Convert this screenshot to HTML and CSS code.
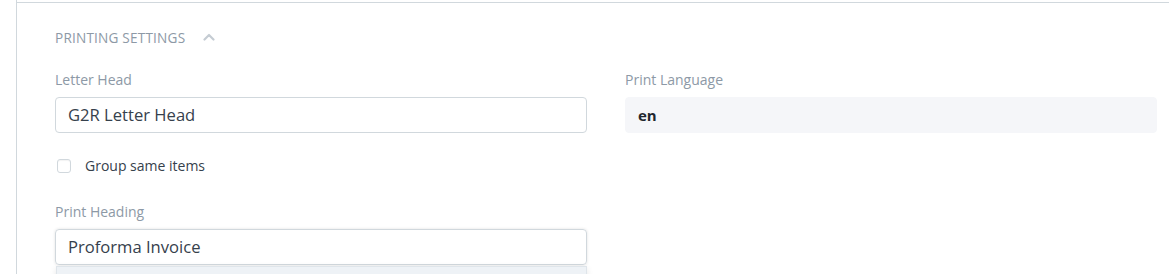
FILE: index.html
```html
<!DOCTYPE html>
<html>
<head>
<meta charset="utf-8">
<link rel="stylesheet" href="styles.css">
</head>
<body>
<div class="frame">
  <section class="section">
    <div class="section-head">
      <span class="section-title">PRINTING SETTINGS</span>
      <svg class="chevron" width="12" height="8" viewBox="0 0 12 8"><path d="M1.5 6.5 L6 2 L10.5 6.5" fill="none" stroke="#c5ccd3" stroke-width="2.2" stroke-linecap="round" stroke-linejoin="round"/></svg>
    </div>
    <div class="columns">
      <div class="col">
        <div class="field">
          <label class="label">Letter Head</label>
          <div class="input">G2R Letter Head</div>
        </div>
        <div class="check">
          <span class="box"></span>
          <span class="check-label">Group same items</span>
        </div>
        <div class="field field-heading">
          <label class="label">Print Heading</label>
          <div class="input input-focus">Proforma Invoice</div>
          <div class="dropdown"></div>
        </div>
      </div>
      <div class="col">
        <div class="field">
          <label class="label">Print Language</label>
          <div class="input input-ro">en</div>
        </div>
      </div>
    </div>
  </section>
</div>
</body>
</html>
```
FILE: styles.css
```css
html, body {
  margin: 0;
  padding: 0;
  background: #ffffff;
  overflow: hidden;
}
body {
  font-family: "Open Sans", "Noto Sans", sans-serif;
  color: #36414c;
}
.frame {
  margin-left: 16px;
  border-left: 1px solid #d1d8dd;
  height: 274px;
  padding-top: 2px;
  box-sizing: border-box;
}
.section {
  border-top: 1px solid #d1d8dd;
  padding: 24px 12px 0 38px;
}
.section-head {
  display: flex;
  align-items: center;
  height: 20px;
}
.section-title {
  font-size: 13.6px;
  color: #8d99a6;
  letter-spacing: 0.2px;
}
.chevron {
  margin-left: 18px;
}
.columns {
  display: grid;
  grid-template-columns: 532px 532px;
  column-gap: 38px;
  margin-top: 23px;
}
.field {
  display: flex;
  flex-direction: column;
}
.label {
  font-size: 14px;
  color: #8d99a6;
  line-height: 20px;
  margin-bottom: 7px;
}
.input {
  height: 36px;
  box-sizing: border-box;
  border: 1px solid #d1d8dd;
  border-radius: 4px;
  padding: 0 12px;
  font-size: 16.6px;
  line-height: 34px;
  color: #36414c;
}
.input-ro {
  background: #f5f6f9;
  border-color: #f5f6f9;
  font-weight: 700;
  font-size: 15px;
  color: #1f272e;
}
.input-focus {
  box-shadow: 0 0 3px rgba(0, 0, 0, 0.12);
}
.check {
  display: flex;
  align-items: center;
  margin-top: 23px;
  padding-left: 2px;
}
.box {
  width: 12px;
  height: 12px;
  border: 1px solid #d1d8dd;
  border-radius: 3px;
  box-shadow: inset 0 1px 1px rgba(0,0,0,0.05);
}
.check-label {
  margin-left: 14px;
  font-size: 14px;
  line-height: 20px;
  color: #36414c;
}
.field-heading {
  margin-top: 26px;
}
.dropdown {
  margin-left: 1px;
  margin-top: 1px;
  height: 12px;
  background: #eef2f6;
  border: 1px solid #dfe5ea;
  box-shadow: 0 2px 6px rgba(0,0,0,0.1);
}
```
